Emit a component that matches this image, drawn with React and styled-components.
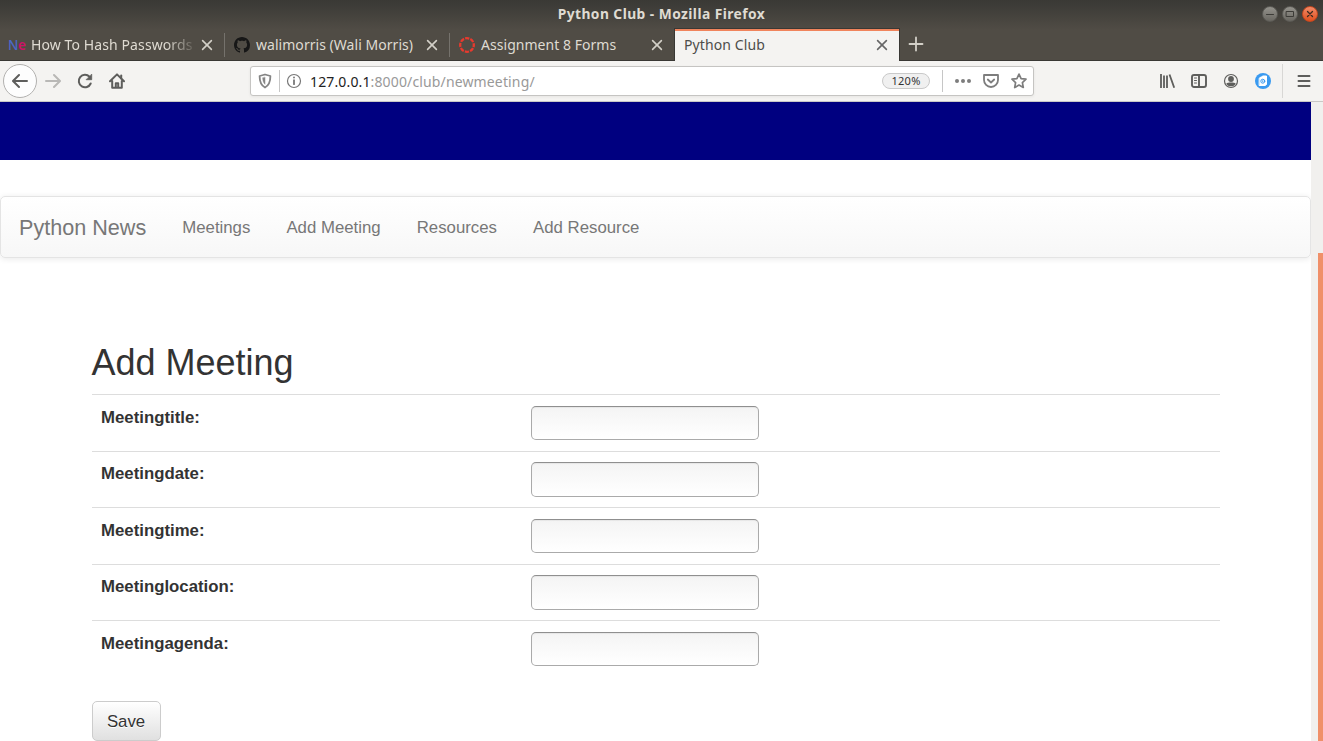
import React from "react";
import styled, { createGlobalStyle, css } from "styled-components";

const Global = createGlobalStyle`
  *, *::before, *::after { box-sizing: border-box; }
  html, body { margin: 0; height: 741px; overflow: hidden; background: #fff; }
  body { font-family: "Liberation Sans", Arial, sans-serif; font-size: 16.8px; color: #333; }
`;

const ui = css`
  font-family: "Noto Sans", "Open Sans", sans-serif;
  white-space: nowrap;
`;

const Window = styled.div`
  display: flex;
  flex-direction: column;
  width: 1323px;
  height: 741px;
  overflow: hidden;
`;

const Chrome = styled.header`
  ${ui}
  display: flex;
  flex-direction: column;
  height: 61px;
  flex: none;
  background: linear-gradient(#3a3935 0, #3c3b37 4px, #504c45 30px, #504c45 60px);
  border-bottom: 1px solid #393834;
`;

const TitleBar = styled.div`
  display: grid;
  grid-template-columns: 1fr auto 1fr;
  align-items: center;
  height: 28px;
  flex: none;
  color: #dfdbd2;
`;

const Title = styled.h1`
  grid-column: 2;
  margin: 0;
  font-size: 13.8px;
  line-height: 28px;
  font-weight: 700;
  letter-spacing: ${(p) => p.$spacing}px;
`;

const WindowButtons = styled.div`
  display: flex;
  justify-content: flex-end;
  gap: 4px;
  padding-right: 5px;
`;

const WindowButton = styled.span`
  display: flex;
  align-items: center;
  justify-content: center;
  width: 16px;
  height: 16px;
  border-radius: 50%;
  border: 1px solid ${(p) => (p.$close ? "#c4471f" : "#5b5a55")};
  background: ${(p) =>
    p.$close ? "linear-gradient(#f18a68, #e0501e)" : "linear-gradient(#94928c, #696761)"};
`;

const Tabs = styled.nav`
  display: flex;
  height: 33px;
  flex: none;
`;

const Tab = styled.div`
  display: flex;
  align-items: center;
  width: ${(p) => (p.$active ? 226 : 225)}px;
  margin-left: ${(p) => (p.$active ? -1 : 0)}px;
  height: 33px;
  padding: 0 ${(p) => (p.$active ? 9 : 10)}px 0 9px;
  color: ${(p) => (p.$active ? "#4d4d4a" : "#dfdbd2")};
  background: ${(p) => (p.$active ? "#f4f3f1" : p.$divided
    ? "linear-gradient(#75726c, #75726c) 224px 5px / 1px 24px no-repeat" : "transparent")};
  ${(p) => p.$active && css`
    border: 1px solid #393834;
    border-bottom: 0;
    box-shadow: inset 0 2px #f0845c;
  `}
`;

const TabLabel = styled.span`
  flex: 1;
  min-width: 0;
  margin-left: ${(p) => (p.$noIcon ? 0 : 6)}px;
  font-size: 14px;
  line-height: 24px;
  letter-spacing: ${(p) => p.$spacing}px;
  ${(p) => p.$fade && css`
    mask-image: linear-gradient(to right, #000 135px, transparent 167px);
  `}
`;

const NeMark = styled.span`
  width: 16px;
  margin-left: -1px;
  margin-right: 1px;
  font-size: 13.5px;
  letter-spacing: -0.6px;
  font-weight: 500;
  color: #4a68c8;
  b { font-weight: 600; color: #cf1168; }
`;

const NewTab = styled.div`
  display: flex;
  align-items: center;
  padding: 0 8px;
  height: 31px;
`;

const Toolbar = styled.div`
  ${ui}
  display: flex;
  align-items: center;
  height: 41px;
  flex: none;
  padding-left: 3px;
  background: #f4f3f1;
  border-bottom: 1px solid #c9c8c6;
`;

const BackButton = styled.span`
  display: flex;
  align-items: center;
  justify-content: center;
  width: 34px;
  height: 34px;
  border: 1px solid #b2b1af;
  border-radius: 50%;
  background: #fdfdfd;
`;

const NavIcons = styled.div`
  display: flex;
  gap: 16px;
  margin-left: 8px;
  width: 205px;
`;

const AddressBar = styled.div`
  display: flex;
  align-items: center;
  width: 784px;
  height: 30px;
  padding: 0 6px 0 6px;
  background: #fff;
  border: 1px solid #c5c4c2;
  border-radius: 3px;
  box-shadow: 0 1px 3px rgba(0, 0, 0, 0.06);
`;

const Rule = styled.i`
  width: 1px;
  height: ${(p) => p.$h}px;
  background: ${(p) => p.$color || "#c6c6c6"};
  margin: 0 ${(p) => p.$right}px 0 ${(p) => p.$left}px;
`;

const Url = styled.span`
  flex: 1;
  margin-left: 8px;
  padding-top: 2px;
  font-size: 14px;
  line-height: 26px;
  letter-spacing: 0.14px;
  color: #999;
  b { font-weight: 400; color: #222; }
`;

const Zoom = styled.span`
  width: 48px;
  height: 16px;
  border: 1px solid #c9c9c9;
  border-radius: 8px;
  background: #f0f0f0;
  color: #333;
  font-size: 11px;
  letter-spacing: 0.3px;
  line-height: 14px;
  text-align: center;
`;

const PageActions = styled.div`
  display: flex;
  gap: 12px;
`;

const ToolIcons = styled.div`
  display: flex;
  gap: 16px;
  margin-left: 125px;
`;

const Viewport = styled.div`
  display: flex;
  flex: 1;
  min-height: 0;
`;

const Page = styled.main`
  width: 1311px;
  overflow: hidden;
`;

const ScrollTrack = styled.div`
  display: flex;
  justify-content: flex-end;
  width: 12px;
  padding-top: 151px;
  background: #f1f0ee;
`;

const ScrollThumb = styled.div`
  width: 5px;
  background: #f09069;
`;

const Banner = styled.div`
  height: 58px;
  background: #000080;
`;

const SiteNav = styled.nav`
  display: flex;
  align-items: center;
  height: 62px;
  margin-top: 36px;
  padding: 2px 0 0 18px;
  border: 1px solid #e4e4e4;
  border-radius: 5px;
  background: linear-gradient(#fff, #f7f7f7);
  box-shadow: 0 1px 6px rgba(0, 0, 0, 0.09);
  color: #777;
`;

const Brand = styled.span`
  font-size: 21.6px;
  margin-right: 36px;
`;

const NavLink = styled.span`
  margin-right: 36.1px;
  text-shadow: 0 1px 0 rgba(255, 255, 255, 0.25);
`;

const Content = styled.section`
  width: 1128px;
  margin: 84px 0 0 92px;
`;

const Heading = styled.h2`
  margin: 0 0 0 -0.5px;
  height: 52.4px;
  padding-top: 1px;
  font-size: 36px;
  font-weight: 400;
  line-height: 40px;
`;

const Row = styled.div`
  display: flex;
  height: 56.4px;
  padding: 10.6px 9px 0;
  border-top: 1px solid #ddd;
`;

const Label = styled.label`
  width: 430px;
  font-weight: 700;
  line-height: 24px;
`;

const Field = styled.input`
  width: 228px;
  height: 34.4px;
  padding: 0 6px;
  border: 1px solid #aaa;
  border-top-color: #8f8f8f;
  border-radius: 5px;
  outline: none;
  font: inherit;
  background: linear-gradient(#f4f4f4, #fff);
  box-shadow: inset 0 1px 1px rgba(0, 0, 0, 0.06);
`;

const SaveButton = styled.button`
  display: block;
  width: 69px;
  height: 40px;
  margin-top: 24.6px;
  padding: 2px 1px 0 0;
  border: 1px solid #ccc;
  border-radius: 5px;
  background: linear-gradient(#fff, #e0e0e0);
  color: #333;
  font: inherit;
  text-shadow: 0 1px 0 #fff;
`;

const Icon = styled.svg`
  flex: none;
  width: 16px;
  height: 16px;
  stroke-linecap: round;
  stroke-linejoin: round;
`;

const Svg = ({ children, color = "#5e5e5c", w = 2, fill = "none" }) => (
  <Icon viewBox="0 0 16 16" fill={fill} stroke={color} strokeWidth={w}>
    {children}
  </Icon>
);

const Close = ({ color = "#d3d0c8" }) => (
  <Svg color={color} w={1.6}><path d="M3.6 3.6l8.8 8.8M12.4 3.6l-8.8 8.8" /></Svg>
);

const GitHub = () => (
  <Svg fill="#171717" color="none">
    <path d="M8 0C3.58 0 0 3.58 0 8c0 3.54 2.29 6.53 5.47 7.59.4.07.55-.17.55-.38 0-.19-.01-.82-.01-1.49-2.01.37-2.53-.49-2.69-.94-.09-.23-.48-.94-.82-1.13-.28-.15-.68-.52-.01-.53.63-.01 1.08.58 1.23.82.72 1.21 1.87.87 2.33.66.07-.52.28-.87.51-1.07-1.78-.2-3.64-.89-3.64-3.95 0-.87.31-1.59.82-2.15-.08-.2-.36-1.02.08-2.12 0 0 .67-.21 2.2.82.64-.18 1.32-.27 2-.27s1.36.09 2 .27c1.53-1.04 2.2-.82 2.2-.82.44 1.1.16 1.92.08 2.12.51.56.82 1.27.82 2.15 0 3.07-1.87 3.75-3.65 3.95.29.25.54.73.54 1.48 0 1.07-.01 1.93-.01 2.2 0 .21.15.46.55.38A8.01 8.01 0 0 0 16 8c0-4.42-3.58-8-8-8z" />
  </Svg>
);

const Canvas = () => (
  <svg width="16" height="16" viewBox="0 0 16 16" fill="none" stroke="#e83a2e" strokeWidth="2.3">
    <circle cx="8" cy="8" r="6.8" strokeDasharray="4.2 1.14" strokeDashoffset="2.1" />
  </svg>
);

const fields = ["Meetingtitle:", "Meetingdate:", "Meetingtime:", "Meetinglocation:", "Meetingagenda:"];
const links = ["Meetings", "Add Meeting", "Resources", "Add Resource"];

export default function App() {
  return (
    <Window>
      <Global />
      <Chrome>
        <TitleBar>
          <Title $spacing={0.44}>Python Club - Mozilla Firefox</Title>
          <WindowButtons>
            <WindowButton><Svg color="#3c3b37" w={1}><path d="M4.500 8.500h7" /></Svg></WindowButton>
            <WindowButton><Svg color="#3c3b37" w={1}><path d="M4.500 5.500h7v5h-7z" /></Svg></WindowButton>
            <WindowButton $close><Svg color="#3c2a20" w={1.3}><path d="M5.500 5.500l5 5M10.500 5.500l-5 5" /></Svg></WindowButton>
          </WindowButtons>
        </TitleBar>
        <Tabs>
          <Tab $divided>
            <NeMark>N<b>e</b></NeMark>
            <TabLabel $fade $spacing={0.1}>How To Hash Passwords</TabLabel>
            <Close />
          </Tab>
          <Tab $divided>
            <GitHub />
            <TabLabel $spacing={0.04}>walimorris (Wali Morris)</TabLabel>
            <Close />
          </Tab>
          <Tab>
            <Canvas />
            <TabLabel $spacing={0.04}>Assignment 8 Forms</TabLabel>
            <Close />
          </Tab>
          <Tab $active>
            <TabLabel $noIcon $spacing={0.1}>Python Club</TabLabel>
            <Close color="#666" />
          </Tab>
          <NewTab><Svg color="#d3d0c8" w={1.8}><path d="M8 1.500v13M1.500 8h13" /></Svg></NewTab>
        </Tabs>
      </Chrome>
      <Toolbar>
        <BackButton><Svg><path d="M15 8H1.500M7 2L1 8l6 6" /></Svg></BackButton>
        <NavIcons>
          <Svg color="#b9b8b6"><path d="M1 8h13.500M9 2l6 6-6 6" /></Svg>
          <Svg><path d="M13.700 10.500A6.200 6.200 0 1 1 12.500 3.800" /><path d="M14.700 1.500v5.200H9.500z" fill="#5e5e5c" strokeWidth="0.8" /></Svg>
          <Svg><path d="M1 8.300L8 1.400l7 6.900M3.200 8v6.800h9.600V8" /><path d="M6.800 14v-3.800h2.400V14" /><path d="M12.200 2.500v3" /></Svg>
        </NavIcons>
        <AddressBar>
          <Svg color="#858585" w={1.8}><path d="M8 1.500l5.400 1.500c0 5.800-1 9.200-5.400 11.500C3.600 12.200 2.600 8.800 2.600 3z" /><path d="M8 4.500v6.800C6.300 9.500 5.800 7.500 5.700 5z" fill="#858585" strokeWidth="0.5" /></Svg>
          <Rule $h={22} $left={6} $right={6} />
          <Svg color="#777" w={1.2}><circle cx="8" cy="8" r="6.5" /><path d="M8 7.200v4" strokeWidth="1.8" /><path d="M8 4.500v.1" strokeWidth="1.9" /></Svg>
          <Url><b>127.0.0.1</b>:8000/club/newmeeting/</Url>
          <Zoom>120%</Zoom>
          <Rule $h={22} $left={12} $right={12} />
          <PageActions>
            <Svg color="none" fill="#7d7d7d"><circle cx="2" cy="8" r="2" /><circle cx="8" cy="8" r="2" /><circle cx="14" cy="8" r="2" /></Svg>
            <Svg color="#7d7d7d" w={1.8}><path d="M1 2h14v5a7 7 0 0 1-14 0z" /><path d="M4.800 6.500L8 9.500l3.200-3" /></Svg>
            <Svg color="#7d7d7d" w={1.7}><path d="M8 1.100l2.100 4.500 4.900.6-3.600 3.400.9 4.900L8 12.100l-4.300 2.400.9-4.900L1 6.200l4.900-.6z" /></Svg>
          </PageActions>
        </AddressBar>
        <ToolIcons>
          <Svg><path d="M2 1v14M5 2.500v12.500M8 2.500v12.500M10.500 1.500l4.700 13.200" strokeLinecap="butt" strokeWidth="1.8" /></Svg>
          <Svg w={1.9}><rect x="1" y="2" width="14" height="12" rx="2" /><path d="M8 2v12" /><path d="M3.500 5h2M3.500 7.500h2M3.500 10h2" strokeWidth="1" /></Svg>
          <Svg w={1.2}><circle cx="8" cy="8" r="6.500" /><circle cx="8" cy="6" r="2.900" fill="#5e5e5c" stroke="none" /><path d="M3.300 10.500c1.500-1.300 8-1.300 9.400 0-1.500 3.800-7.900 3.800-9.400 0z" fill="#5e5e5c" stroke="none" /></Svg>
          <Svg color="#fff" w={1}><circle cx="8" cy="8" r="8" fill="#3a9af0" stroke="none" /><path d="M4.500 5l1.500-1h1l.5-1h4v8.500l-1.500 1h-5.500z" fill="#fff" /><circle cx="7.800" cy="8.200" r="2" stroke="#3a9af0" /><path d="M7.800 7.600v1.200" stroke="#3a9af0" /></Svg>
        </ToolIcons>
        <Rule $h={34} $left={11} $right={13} $color="#d8d7d5" />
        <Svg><path d="M2.500 3h11M2.500 8h11M2.500 13h11" /></Svg>
      </Toolbar>
      <Viewport>
        <Page>
          <Banner />
          <SiteNav>
            <Brand>Python News</Brand>
            {links.map((text) => <NavLink key={text}>{text}</NavLink>)}
          </SiteNav>
          <Content>
            <Heading>Add Meeting</Heading>
            {fields.map((text) => (
              <Row key={text}>
                <Label htmlFor={text}>{text}</Label>
                <Field id={text} />
              </Row>
            ))}
            <SaveButton>Save</SaveButton>
          </Content>
        </Page>
        <ScrollTrack><ScrollThumb /></ScrollTrack>
      </Viewport>
    </Window>
  );
}
